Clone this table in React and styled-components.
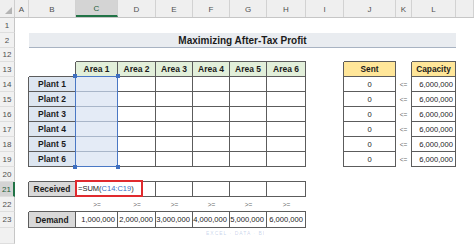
import React from "react";
import styled, { createGlobalStyle } from "styled-components";

const COLS = [15, 14, 47, 42, 38, 37, 37, 37, 39, 38, 52, 16, 44, 18];
const LETTERS = ["A", "B", "C", "D", "E", "F", "G", "H", "I", "J", "K", "L", "M"];
const LINE = "#5c5c5c";
const GREEN = "#217346";

const GlobalStyle = createGlobalStyle`
  html, body { margin: 0; padding: 0; background: #fff; }
  body { font-family: "Liberation Sans", Arial, sans-serif; overflow: hidden; }
`;

const Sheet = styled.div`
  position: relative;
  width: 474px;
  height: 244px;
  overflow: hidden;
  background: #fff;
`;

const Row = styled.div`
  display: grid;
  grid-template-columns: ${COLS.map((c) => c + "px").join(" ")};
  height: ${(p) => p.$h}px;
`;

const HeadRow = styled(Row)`
  background: #efefef;
  border-bottom: 1px solid #c6c6c6;
  box-sizing: border-box;
`;

const Corner = styled.div`
  display: flex;
  align-items: flex-end;
  justify-content: flex-end;
  padding: 0 2px 3px 0;
  border-right: 1px solid #cfcfcf;
`;

const ColHead = styled.div`
  box-sizing: border-box;
  display: flex;
  align-items: center;
  justify-content: center;
  padding-top: 2px;
  font-size: 8px;
  color: ${(p) => (p.$sel ? "#1f5f3a" : "#4f4f4f")};
  background: ${(p) => (p.$sel ? "#d4d4d4" : "transparent")};
  border-right: 1px solid #d2d2d2;
  border-bottom: ${(p) => (p.$sel ? `2px solid ${GREEN}` : "0")};
`;

const RowHead = styled.div`
  box-sizing: border-box;
  display: flex;
  align-items: center;
  justify-content: center;
  font-size: 8px;
  color: ${(p) => (p.$sel ? "#1f5f3a" : "#4f4f4f")};
  background: ${(p) => (p.$sel ? "#d4d4d4" : "#f1f1f1")};
  border-right: ${(p) => (p.$sel ? `2px solid ${GREEN}` : "1px solid #c6c6c6")};
  border-bottom: 1px solid #dedede;
`;

const Cell = styled.div`
  box-sizing: border-box;
  position: relative;
  display: flex;
  align-items: center;
  justify-content: ${(p) =>
    p.$align === "right" ? "flex-end" : p.$align === "left" ? "flex-start" : "center"};
  padding: 0 ${(p) => (p.$align === "right" ? 2 : 1)}px 0 1px;
  grid-column: span ${(p) => p.$span || 1};
  background: ${(p) => p.$fill || "transparent"};
  border-right: ${(p) => (p.$r ? `1px solid ${p.$rc || LINE}` : "0")};
  border-bottom: ${(p) => (p.$b ? `1px solid ${p.$bc || LINE}` : "0")};
  font-size: ${(p) => p.$size || 7.6}px;
  font-weight: ${(p) => (p.$bold ? 700 : 400)};
  color: ${(p) => p.$color || "#1b1b1b"};
  white-space: nowrap;
`;

const RangeBox = styled.div`
  position: absolute;
  z-index: 1;
  left: -1px;
  top: -1px;
  width: 43px;
  height: 91px;
  box-sizing: border-box;
  border: 1px solid #4a78c4;
  pointer-events: none;
`;

const Handle = styled.span`
  position: absolute;
  width: 4px;
  height: 4px;
  background: #3f6fbf;
  ${(p) => (p.$top ? "top: -3px;" : "bottom: -3px;")}
  ${(p) => (p.$left ? "left: -3px;" : "right: -3px;")}
`;

const FormulaBox = styled.div`
  position: absolute;
  z-index: 2;
  left: -1px;
  top: -2px;
  width: 68px;
  height: 17px;
  box-sizing: border-box;
  border: 2px solid #e02a2e;
  background: #fff;
  display: flex;
  align-items: center;
  padding-left: 1px;
  font-size: 7.5px;
  color: #1b1b1b;
`;

const Ref = styled.span`
  color: #3a6fc6;
`;

const Watermark = styled.div`
  position: absolute;
  left: 206px;
  top: 231px;
  pointer-events: none;
  color: rgba(72, 110, 190, 0.3);
  font-size: 5px;
  letter-spacing: 1px;
  line-height: 1;
`;

const AREA = { $fill: "#e2efda", $bold: true, $size: 8.5, $r: true, $b: true };
const PLANT = { $fill: "#dde6f1", $bold: true, $size: 8.5, $r: true, $b: true };
const YELLOW = { $fill: "#ffe699", $bold: true, $size: 8.3, $r: true, $b: true };
const GRAY = { $fill: "#d9d9d9", $bold: true, $size: 8.4, $r: true, $b: true };
const BOX = { $r: true, $b: true };
const SIGN = { $size: 6.5, $color: "#6a6a6a" };
const AREAS = ["C", "D", "E", "F", "G", "H"];

function fill(letters, props) {
  const out = {};
  letters.forEach((l) => (out[l] = props));
  return out;
}

const rows = [
  { num: 1, h: 15 },
  {
    num: 2,
    h: 15,
    cells: {
      B: {
        $span: 11,
        $fill: "#e9ecf0",
        $b: true,
        $bc: "#a8b3c2",
        $bold: true,
        $size: 10,
        children: "Maximizing After-Tax Profit",
      },
      ...fill(["C", "D", "E", "F", "G", "H", "I", "J", "K", "L"], null),
    },
  },
  { num: 12, h: 14, cells: { ...fill(AREAS, { $b: true }), J: { $b: true }, L: { $b: true } } },
  {
    num: 13,
    h: 15,
    cells: {
      B: { $r: true, $b: true },
      ...Object.fromEntries(AREAS.map((l, i) => [l, { ...AREA, children: `Area ${i + 1}` }])),
      I: { $r: true },
      J: { ...YELLOW, children: "Sent" },
      K: { $r: true },
      L: { ...YELLOW, children: "Capacity" },
    },
  },
  ...[1, 2, 3, 4, 5, 6].map((n) => ({
    num: 13 + n,
    h: 15,
    cells: {
      A: { $r: true },
      B: { ...PLANT, children: `Plant ${n}` },
      C: {
        $fill: "#e4ebf6",
        $r: true,
        $b: true,
        $bc: "#a9b6c9",
        children:
          n === 1 ? (
            <RangeBox>
              <Handle $top $left />
              <Handle $top />
              <Handle $left />
              <Handle />
            </RangeBox>
          ) : null,
      },
      ...fill(["D", "E", "F", "G", "H"], BOX),
      I: { $r: true },
      J: { ...BOX, children: "0" },
      K: { $r: true, ...SIGN, children: "<=" },
      L: { ...BOX, $align: "right", children: "6,000,000" },
    },
  })),
  { num: 20, h: 15, cells: fill(["B", ...AREAS], { $b: true }) },
  {
    num: 21,
    h: 15,
    sel: true,
    cells: {
      A: { $r: true },
      B: { ...GRAY, children: "Received" },
      C: {
        ...BOX,
        children: (
          <FormulaBox>
            =SUM(<Ref>C14:C19</Ref>)
          </FormulaBox>
        ),
      },
      ...fill(["D", "E", "F", "G", "H"], BOX),
    },
  },
  {
    num: 22,
    h: 15,
    cells: { B: { $b: true }, ...fill(AREAS, { $b: true, ...SIGN, children: ">=" }) },
  },
  {
    num: 23,
    h: 16,
    cells: {
      A: { $r: true },
      B: { ...GRAY, children: "Demand" },
      ...Object.fromEntries(
        AREAS.map((l, i) => [l, { ...BOX, $align: "right", children: `${i + 1},000,000` }])
      ),
    },
  },
  { num: "", h: 16 },
];

function SheetRow({ num, h, sel, cells = {} }) {
  return (
    <Row $h={h}>
      <RowHead $sel={sel}>{num}</RowHead>
      {LETTERS.map((l) => {
        const c = cells[l];
        if (c === null) return null;
        return <Cell key={l} {...(c || {})} />;
      })}
    </Row>
  );
}

export default function App() {
  return (
    <>
      <GlobalStyle />
      <Sheet>
        <HeadRow $h={18}>
          <Corner>
            <svg width="7" height="7" viewBox="0 0 7 7">
              <polygon points="7,0 7,7 0,7" fill="#b4b4b4" />
            </svg>
          </Corner>
          {LETTERS.map((l) => (
            <ColHead key={l} $sel={l === "C"}>
              {l === "M" ? "" : l}
            </ColHead>
          ))}
        </HeadRow>
        {rows.map((r, i) => (
          <SheetRow key={i} {...r} />
        ))}
        <Watermark>EXCEL · DATA · BI</Watermark>
      </Sheet>
    </>
  );
}
